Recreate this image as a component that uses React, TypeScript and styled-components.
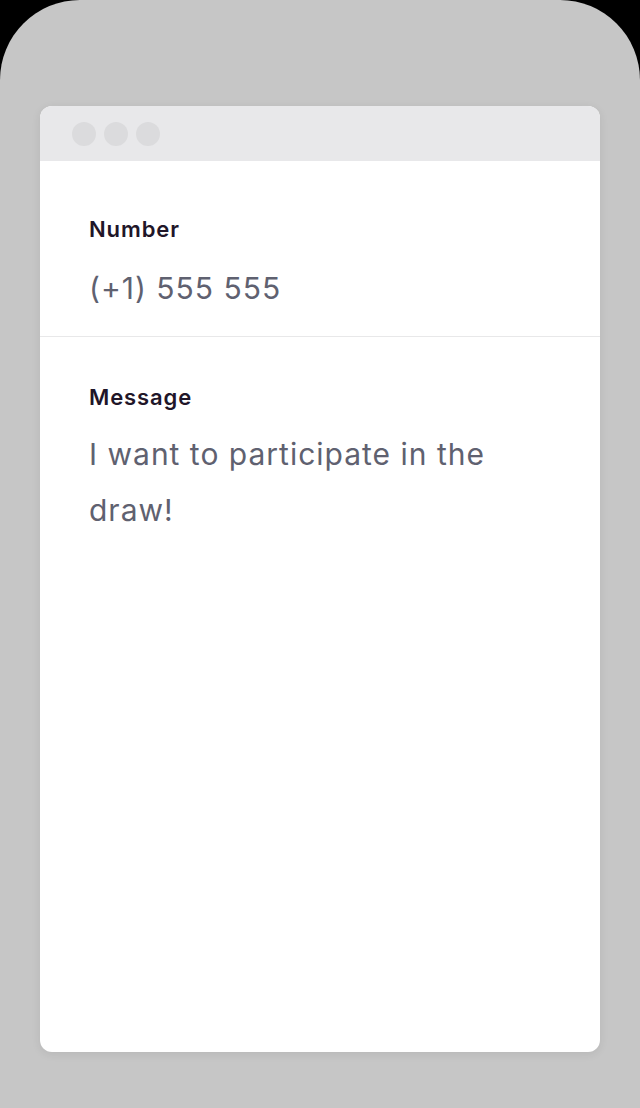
import React from 'react'
import styled, { createGlobalStyle } from 'styled-components'

const GlobalStyle = createGlobalStyle`
	html, body {
		margin: 0;
		padding: 0;
		background: #000;
	}
	body {
		font-family: Inter, 'Noto Sans', sans-serif;
		-webkit-font-smoothing: antialiased;
	}
`

const Phone = styled.div`
	display: flex;
	flex-direction: column;
	box-sizing: border-box;
	width: 640px;
	height: 1108px;
	padding: 106px 40px 56px;
	background: #c6c6c6;
	border-radius: 80px 80px 0 0;
`

const Window = styled.div`
	display: flex;
	flex-direction: column;
	flex: 1;
	background: #fff;
	border-radius: 12px;
	overflow: hidden;
	box-shadow: 0 2px 10px rgba(0, 0, 0, 0.08);
`

const TitleBar = styled.div`
	display: flex;
	align-items: center;
	gap: 8px;
	height: 55px;
	padding: 0 32px;
	background: #e8e8ea;
`

const Dot = styled.span`
	width: 24px;
	height: 24px;
	border-radius: 50%;
	background: #dbdbdd;
`

const Field = styled.div<{ $top: number; $divided?: boolean }>`
	display: flex;
	flex-direction: column;
	padding: ${({ $top }) => $top}px 49px 20px;
	border-bottom: ${({ $divided }) => ($divided ? '1px solid #e8e8e9' : 'none')};
`

const Label = styled.div`
	font-size: 22px;
	line-height: 28px;
	font-weight: 600;
	letter-spacing: 0.9px;
	color: #1f1629;
`

const Value = styled.div<{ $gap: number }>`
	margin-top: ${({ $gap }) => $gap}px;
	font-size: 30px;
	line-height: 56px;
	font-weight: 400;
	letter-spacing: 1px;
	color: #5f6170;
`

const App = () => {
	return (
		<>
			<GlobalStyle />
			<Phone>
				<Window>
					<TitleBar>
						<Dot />
						<Dot />
						<Dot />
					</TitleBar>
					<Field $top={54} $divided>
						<Label>Number</Label>
						<Value $gap={17}>(+1) 555 555</Value>
					</Field>
					<Field $top={46}>
						<Label>Message</Label>
						<Value $gap={15}>I want to participate in the draw!</Value>
					</Field>
				</Window>
			</Phone>
		</>
	)
}

export default App
